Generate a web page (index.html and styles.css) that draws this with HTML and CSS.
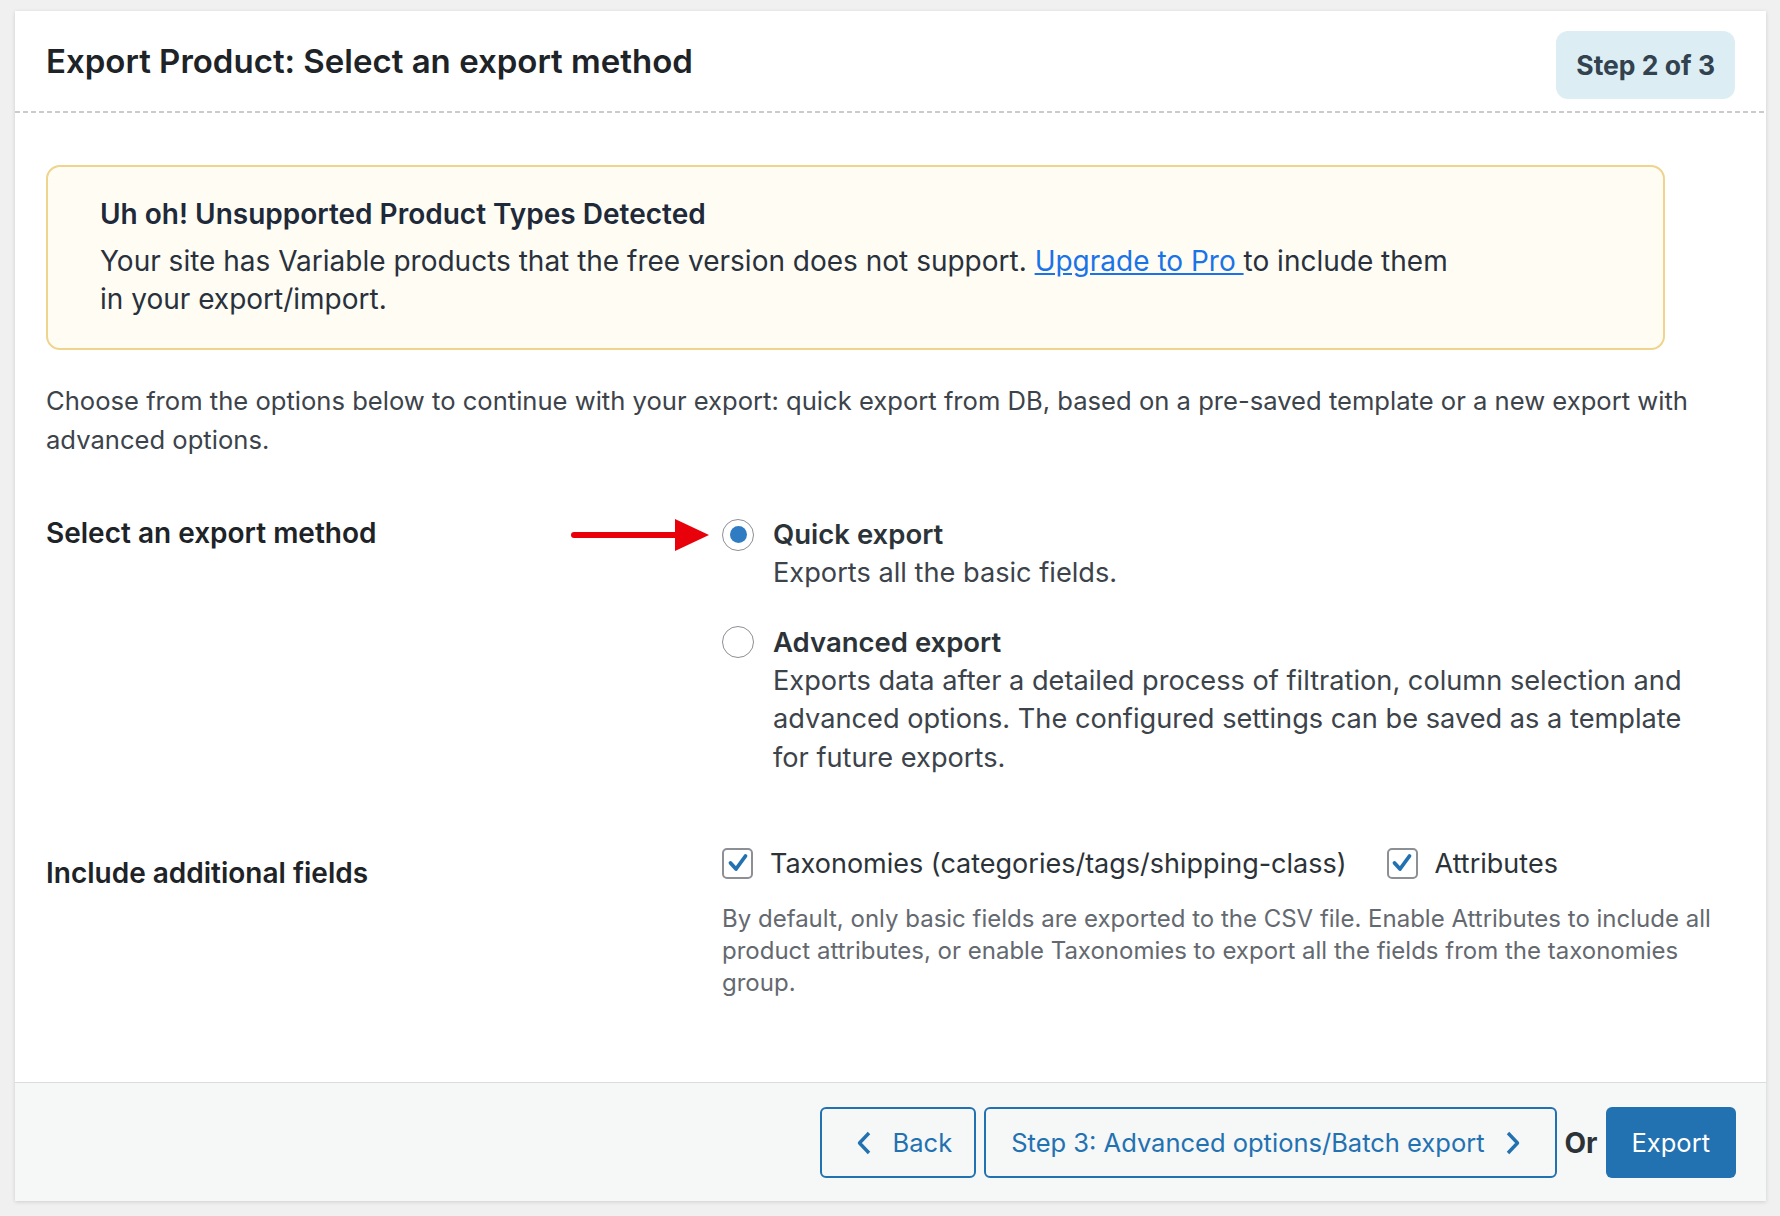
FILE: index.html
```html
<!DOCTYPE html>
<html lang="en">
<head>
    <meta charset="UTF-8">
    <meta name="viewport" content="width=device-width, initial-scale=1.0">
    <title>Export Product</title>
    <link rel="stylesheet" href="styles.css">
</head>
<body>
    <div class="wizard">
        <header class="wizard-header">
            <h1>Export Product: Select an export method</h1>
            <span class="step-badge">Step 2 of 3</span>
        </header>

        <div class="wizard-body">
            <div class="notice">
                <h3>Uh oh! Unsupported Product Types Detected</h3>
                <p>Your site has Variable products that the free version does not support. <a href="#">Upgrade to Pro </a>to include them<br>in your export/import.</p>
            </div>

            <p class="intro">Choose from the options below to continue with your export: quick export from DB, based on a pre-saved template or a new export with<br>advanced options.</p>

            <div class="form-row method-row">
                <div class="row-label">
                    <span>Select an export method</span>
                    <svg class="pointer" width="138" height="34" viewBox="0 0 138 34">
                        <line x1="3" y1="17" x2="108" y2="17" stroke="#e8000b" stroke-width="6" stroke-linecap="round"/>
                        <polygon points="104,1 138,17 104,33" fill="#e8000b"/>
                    </svg>
                </div>
                <div class="options">
                    <label class="option">
                        <input type="radio" name="method" checked>
                        <span class="option-text">
                            <strong>Quick export</strong>
                            <span>Exports all the basic fields.</span>
                        </span>
                    </label>
                    <label class="option">
                        <input type="radio" name="method">
                        <span class="option-text">
                            <strong>Advanced export</strong>
                            <span>Exports data after a detailed process of filtration, column selection and<br>advanced options. The configured settings can be saved as a template<br>for future exports.</span>
                        </span>
                    </label>
                </div>
            </div>

            <div class="form-row fields-row">
                <div class="row-label">
                    <span>Include additional fields</span>
                </div>
                <div class="options">
                    <div class="checks">
                        <label class="check">
                            <span class="box"><svg width="24" height="24" viewBox="0 0 24 24"><polyline points="4.5,12 10,18 19.5,5" fill="none" stroke="#2271b1" stroke-width="3.8" stroke-linecap="round" stroke-linejoin="round"/></svg></span>
                            Taxonomies (categories/tags/shipping-class)
                        </label>
                        <label class="check">
                            <span class="box"><svg width="24" height="24" viewBox="0 0 24 24"><polyline points="4.5,12 10,18 19.5,5" fill="none" stroke="#2271b1" stroke-width="3.8" stroke-linecap="round" stroke-linejoin="round"/></svg></span>
                            Attributes
                        </label>
                    </div>
                    <p class="help">By default, only basic fields are exported to the CSV file. Enable Attributes to include all<br>product attributes, or enable Taxonomies to export all the fields from the taxonomies<br>group.</p>
                </div>
            </div>
        </div>

        <footer class="wizard-footer">
            <button class="btn btn-outline btn-back">
                <svg width="14" height="24" viewBox="0 0 14 24"><polyline points="12,2 2.5,12 12,22" fill="none" stroke="#2271b1" stroke-width="3.4" stroke-linejoin="round"/></svg>
                Back
            </button>
            <button class="btn btn-outline btn-next">
                Step 3: Advanced options/Batch export
                <svg width="14" height="24" viewBox="0 0 14 24"><polyline points="2,2 11.5,12 2,22" fill="none" stroke="#2271b1" stroke-width="3.4" stroke-linejoin="round"/></svg>
            </button>
            <span class="or">Or</span>
            <button class="btn btn-primary">Export</button>
        </footer>
    </div>
</body>
</html>
```

FILE: styles.css
```css
body {
    margin: 0;
    padding: 11px 14px 15px 15px;
    background-color: #f0f0f1;
    font-family: Inter, "Noto Sans", sans-serif;
    color: #3c434a;
}
.wizard {
    background-color: #ffffff;
    box-shadow: 0 1px 4px rgba(0, 0, 0, 0.14);
}
.wizard-header {
    display: flex;
    justify-content: space-between;
    align-items: flex-start;
    padding: 20px 31px 14px;
    /* dashed divider with longer dashes than the browser's */
    background-image: repeating-linear-gradient(to right, #cbcbcb 0 5px, transparent 5px 8px);
    background-size: 100% 2px;
    background-position: left bottom;
    background-repeat: no-repeat;
}
.wizard-header h1 {
    margin: 10px 0 0;
    font-size: 33px;
    line-height: 40px;
    font-weight: 600;
    color: #1d2327;
}
.step-badge {
    display: flex;
    align-items: center;
    height: 68px;
    padding: 0 20px;
    border-radius: 12px;
    background-color: #ddedf4;
    color: #32424f;
    font-size: 26.5px;
    font-weight: 700;
}
.wizard-body {
    padding: 0 31px 84px;
}
.notice {
    max-width: 1619px;
    box-sizing: border-box;
    margin-top: 52px;
    padding: 30px 52px 30px;
    border: 2px solid #eed48c;
    border-radius: 14px;
    background-color: #fffdf3;
}
.notice h3 {
    margin: 0 0 12px;
    font-size: 28px;
    line-height: 34px;
    font-weight: 600;
    color: #1e2939;
}
.notice p {
    margin: 0;
    font-size: 28px;
    line-height: 37.5px;
    color: #29313d;
}
.notice a {
    color: #1a73e8;
}
.intro {
    margin: 32px 0 0;
    font-size: 25.6px;
    line-height: 38.5px;
}
.form-row {
    display: grid;
    grid-template-columns: 676px 1fr;
}
.method-row {
    margin-top: 56px;
}
.fields-row {
    margin-top: 67px;
}
.row-label {
    display: flex;
    justify-content: space-between;
    align-items: flex-start;
    font-size: 28px;
    line-height: 36px;
    font-weight: 600;
    color: #1d2327;
}
.fields-row .row-label {
    padding-top: 11px;
}
.pointer {
    margin: 3px 13px 0 0;
}
.option {
    display: flex;
    align-items: flex-start;
    gap: 19px;
    cursor: pointer;
}
.option + .option {
    margin-top: 30px;
}
.option input {
    appearance: none;
    flex: none;
    width: 32px;
    height: 32px;
    margin: 3.5px 0 0;
    border: 1.5px solid #8c8f94;
    border-radius: 50%;
    background-color: #fff;
    display: flex;
    align-items: center;
    justify-content: center;
}
.option input:checked::before {
    content: "";
    width: 17px;
    height: 17px;
    border-radius: 50%;
    background-color: #2f7cc3;
}
.option-text {
    display: flex;
    flex-direction: column;
    font-size: 27.2px;
    line-height: 38.5px;
}
.option-text strong {
    font-size: 27.5px;
    line-height: 39px;
    font-weight: 600;
    color: #2c3338;
}
.checks {
    display: flex;
    align-items: center;
    gap: 40px;
    height: 38px;
}
.check {
    display: flex;
    align-items: center;
    gap: 17px;
    font-size: 27px;
    color: #2c3338;
}
.box {
    width: 31px;
    height: 31px;
    box-sizing: border-box;
    border: 2px solid #8c8f94;
    border-radius: 5px;
    display: flex;
    align-items: center;
    justify-content: center;
}
.help {
    margin: 21px 0 0;
    font-size: 24px;
    line-height: 31.8px;
    color: #646970;
}
.wizard-footer {
    display: flex;
    justify-content: flex-end;
    align-items: center;
    gap: 8px;
    padding: 24px 30px 23px;
    border-top: 1px solid #dcdcde;
    background-color: #f6f7f7;
}
.btn {
    display: flex;
    align-items: center;
    height: 71px;
    border-radius: 6px;
    font-family: Inter, "Noto Sans", sans-serif;
    font-size: 25.5px;
    cursor: pointer;
}
.btn-outline {
    gap: 21px;
    border: 2px solid #2271b1;
    background-color: #f6f7f7;
    color: #2271b1;
}
.btn-back {
    gap: 22px;
    padding: 0 22px 0 35px;
}
.btn-next {
    padding: 0 35px 0 25px;
}
.btn-primary {
    padding: 0 26px;
    border: none;
    background-color: #2271b1;
    color: #ffffff;
}
.or {
    font-size: 28px;
    font-weight: 700;
    color: #2c3338;
}
```
